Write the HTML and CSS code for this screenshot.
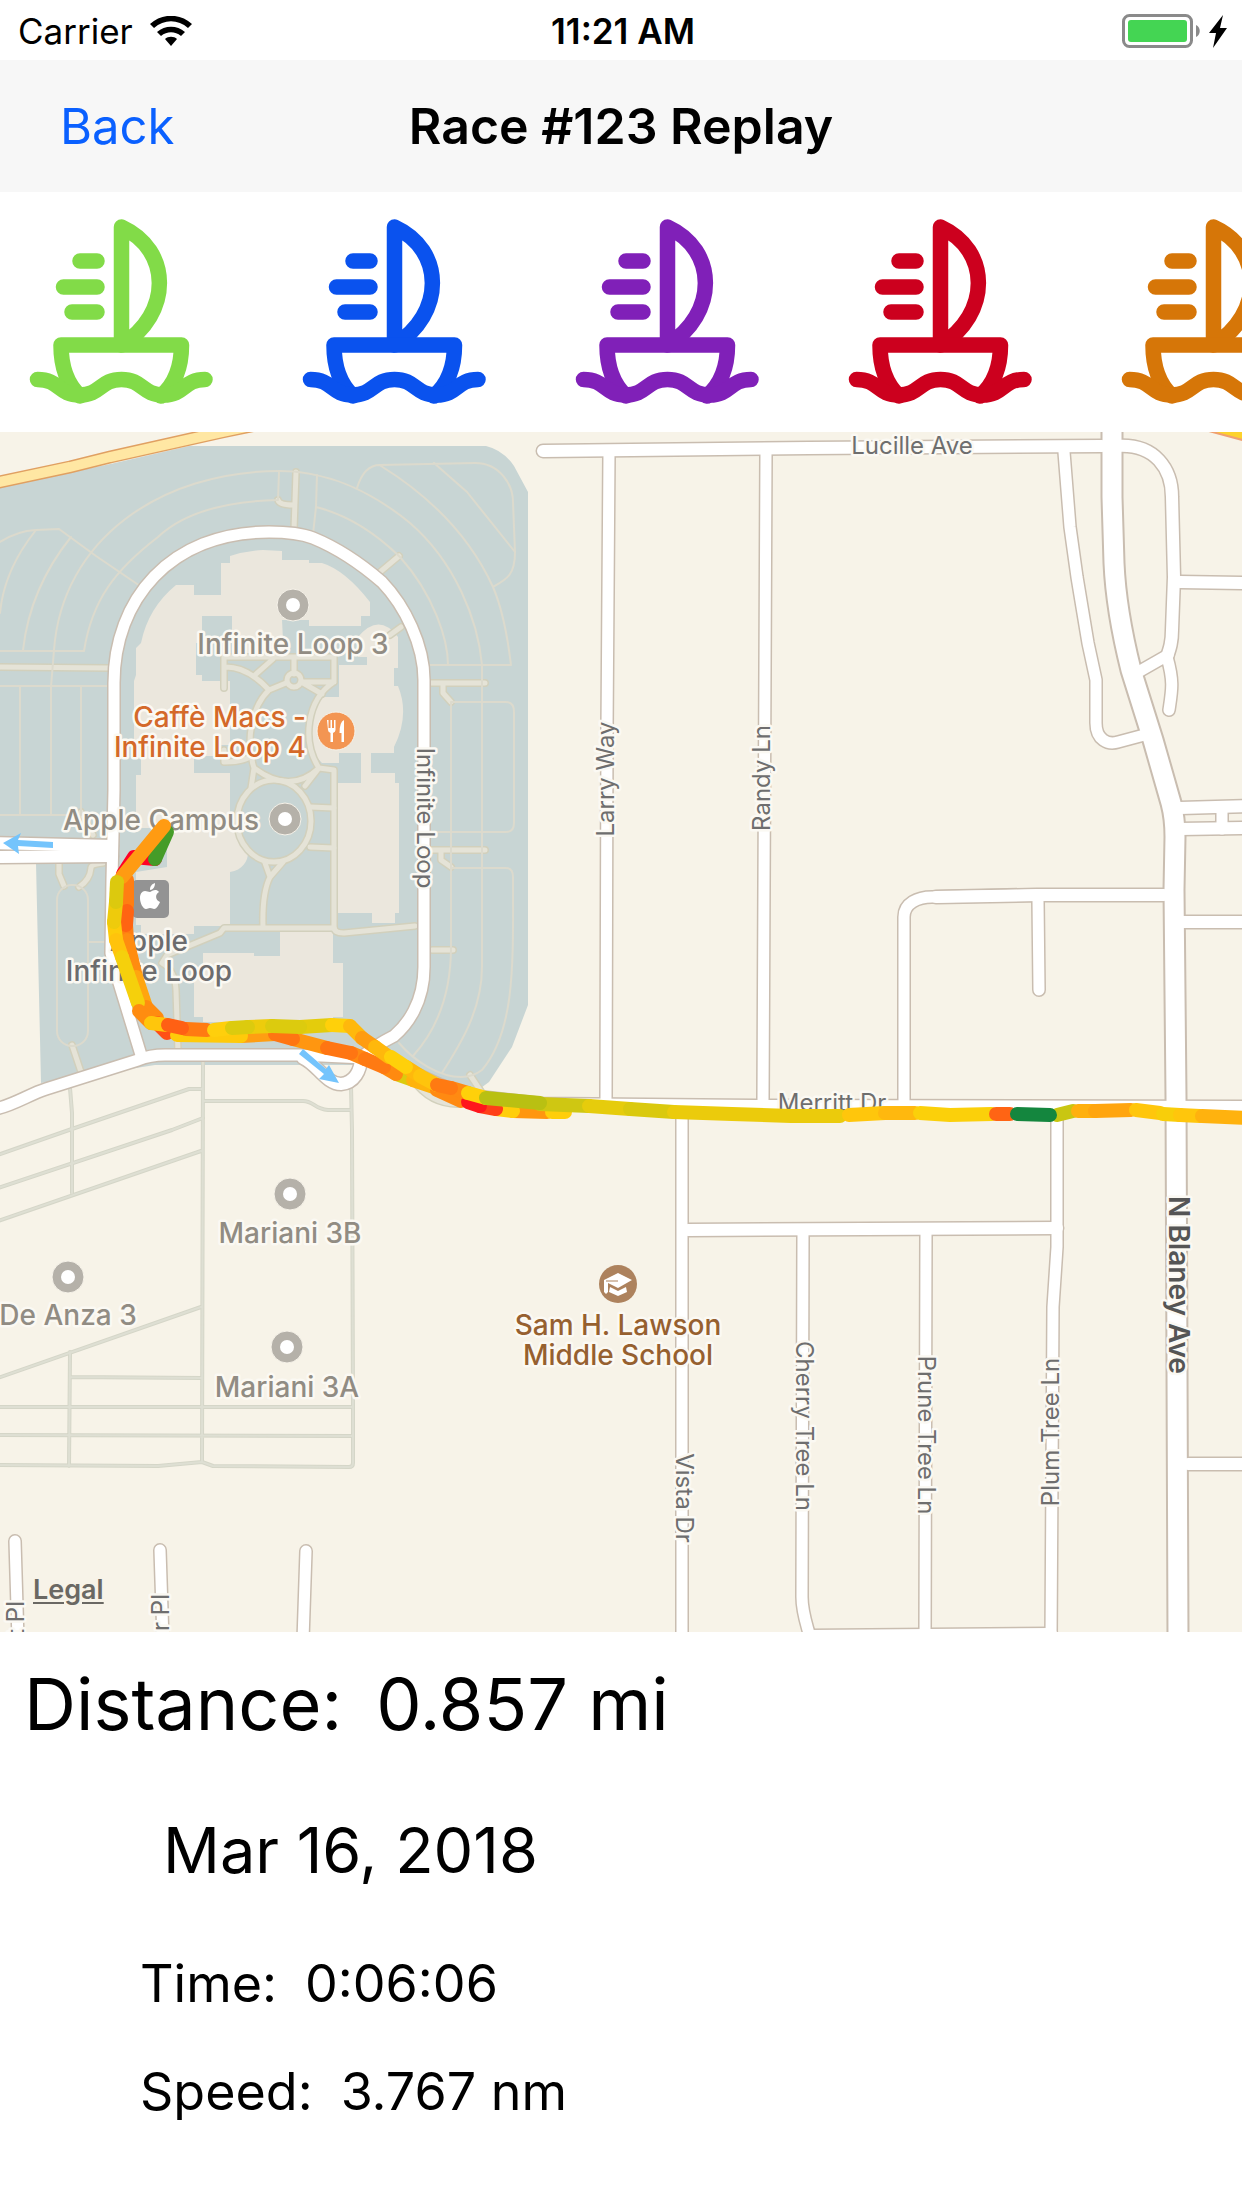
FILE: index.html
```html
<!DOCTYPE html>
<html lang="en">
<head>
<meta charset="utf-8">
<meta name="viewport" content="width=device-width, initial-scale=1">
<title>Race #123 Replay</title>
<link rel="stylesheet" href="styles.css">
</head>
<body>
<svg class="defs" aria-hidden="true">
  <symbol id="boat" viewBox="0 0 184 186">
    <g fill="none" stroke="currentColor" stroke-width="15.500" stroke-linecap="round" stroke-linejoin="round">
      <path d="M92.500 126V8C143 31 143 95 92.500 126"/>
      <path d="M51 177C39 166 32 148 32 126H152.500C152.500 148 145 166 132 177"/>
      <path d="M8.500 160.500C31 160.500 29 176 50.500 176S71 160.500 92.500 160.500S113 176 134.500 176S154 160.500 176 160.500"/>
      <path d="M51 42H68M34.500 68H68M43 93H68"/>
    </g>
  </symbol>
  <symbol id="place" viewBox="0 0 34 34">
    <circle cx="17" cy="17" r="16" fill="#b5b1a9" stroke="#f7f3ea" stroke-width="1"/>
    <circle cx="17" cy="17" r="7" fill="#fff"/>
  </symbol>
</svg>

<div class="status">
  <div class="status-left">
    <span>Carrier</span>
    <svg class="wifi" viewBox="0 0 42 30" aria-label="Wi-Fi">
      <path d="M21 30 15 23C18 20 24 20 27 23Z"/>
      <path d="M7 16C15 9 27 9 35 16L31 20C25 15 17 15 11 20Z"/>
      <path d="M0 8C12-3 30-3 42 8L38 12C28 3 14 3 4 12Z"/>
    </svg>
  </div>
  <time class="clock">11:21 AM</time>
  <div class="status-right">
    <svg class="battery" viewBox="0 0 106 34" aria-label="Charging">
      <rect x="1.5" y="1.5" width="68" height="31" rx="6" fill="none" stroke="#8a8a8a" stroke-width="3"/>
      <rect x="6" y="6" width="59" height="22" rx="3" fill="#44d553"/>
      <path d="M74 11C79 13 79 21 74 23Z" fill="#8a8a8a"/>
      <path d="M101 1 87 19H94L91 34 105 14H98Z"/>
    </svg>
  </div>
</div>

<header class="navbar">
  <button class="back" type="button">Back</button>
  <h1 class="title">Race #123 Replay</h1>
</header>

<nav class="boats" aria-label="Boats">
  <button class="boat green" type="button" aria-label="Green boat"><svg><use href="#boat"/></svg></button>
  <button class="boat blue" type="button" aria-label="Blue boat"><svg><use href="#boat"/></svg></button>
  <button class="boat purple" type="button" aria-label="Purple boat"><svg><use href="#boat"/></svg></button>
  <button class="boat red" type="button" aria-label="Red boat"><svg><use href="#boat"/></svg></button>
  <button class="boat orange" type="button" aria-label="Orange boat"><svg><use href="#boat"/></svg></button>
</nav>

<main>
<div class="map">
<svg class="map-canvas" viewBox="0 432 1242 1200" role="img" aria-label="Map of the race track">
  <defs>
    <g id="roads-minor">
      <path d="M609 453 607 730 606 1100M766 453 763 1100"/>
      <path d="M1064 452 1070 527 1077 577 1088 643 1096 680V723C1096 740 1108 745 1118 742L1148 734"/>
      <path d="M904 1100V917C904 903 918 897 932 897L1037 895M1038 900 1039 990"/>
      <path d="M1168 655 1140 671M1167 657C1174 682 1172 690 1169 710M1222 808V829"/>
      <path d="M682 1110V1640M1057 1110V1247L1053 1307 1051 1640M803 1235 802 1597C802 1612 806 1622 810 1637M926 1233 925 1640"/>
      <path d="M15 1541 18 1640M160 1550 163 1640M306 1551 303 1640"/>
    </g>
    <g id="roads-mid">
      <path d="M543 451 809 448 1102 446M1116 446C1156 443 1172 470 1172 497L1174 577 1172 630C1172 642 1170 648 1167 657"/>
      <path d="M936 897 1037 895 1164 895M1180 582 1250 583M1180 808 1250 806M1180 829 1250 828M1183 922 1250 922"/>
      <path d="M688 1230 1057 1228M1188 1464H1250M810 1636 1051 1634"/>
      <path d="M362 1057C394 1057 430 1086 470 1096L540 1104 755 1106 1250 1107"/>
      <path d="M-5 843 112 846M-5 857 112 856"/>
      <path d="M303 1058C317 1064 326 1084 341 1084C354 1083 361 1071 361 1057"/>
    </g>
    <g id="roads-loop">
      <path d="M141 1055 119 983 111 953 112 880 114 790V683C114 600 170 532 269 532C280 532 300 533 313 538C335 547 360 563 382 582C405 606 424 645 424 680V967C424 1003 407 1025 394 1036C382 1042 372 1048 362 1057"/>
      <path d="M-5 1109C12 1106 30 1094 46 1089L138 1060Q150 1055 165 1055L300 1055 364 1058"/>
    </g>
    <g id="roads-major">
      <path d="M1112 425V497L1114 563Q1116 610 1131 670L1153 740 1171 803Q1175 818 1175 837L1174 890 1176 1097 1178 1640"/>
    </g>
    <g id="paths-wide">
      <path d="M296 472 294 530M278 500Q279 505 293 505M399 556 380 572M401 627 390 635M-5 667 110 668M430 683H485M443 684V693L451 702"/>
      <path d="M224 688V657H334V682H301M226 667Q248 667 269 690M273 659 255 675M294 657V674M286 683 269 690C252 706 245 740 254 768L251 788M303 683 322 694M334 682C306 700 302 742 319 768C300 786 278 786 254 768M319 768 305 786M319 768 334 770V927Q334 933 344 933L415 926M248 758Q240 762 224 762V750"/>
      <path d="M310 807 334 808M310 847 334 848M265 863 270 877 283 862M270 877Q262 893 263 927M334 928H224L220 933 167 955 162 963Q175 970 176 990L178 1052"/>
      <path d="M432 850H485M441 852V860L451 867M432 950H453M59 863V874L64 886M103 863Q91 864 91 868Q90 880 79 887M72 1045 81 1072M81 812 93 835M470 1075 484 1096M413 1080Q430 1104 458 1104"/>
      <circle cx="294" cy="680" r="7"/>
      <ellipse cx="274" cy="821" rx="37" ry="41"/>
    </g>
    <g id="lot-lines">
      <path d="M-5 1156 69 1130 189 1089H203M-5 1189 172 1130 203 1118M-5 1222 201 1151M70 1088 72 1113V1193M203 1056 202 1462M203 1101H303C314 1101 314 1109 328 1110H351M351 1086 352 1130 353 1407V1463Q353 1467 349 1467L213 1466 202 1462 158 1466-5 1465M201 1307-5 1379M70 1352 69 1466M70 1377 202 1378M-5 1407H353M-5 1435 353 1436"/>
    </g>
  </defs>

  <rect class="land" x="0" y="432" width="1242" height="1200"/>
  <path class="campus" d="M0 487 115 463 189 446H486Q503 450 514 466L528 492V1005L512 1047 489 1082 470 1096 400 1065H155L41 1083 36 863 0 862Z"/>
  <path class="highway-edge" d="M-5 483 70 467 110 457 222 432 270 422"/>
  <path class="highway" d="M-5 483 70 467 110 457 222 432 270 422"/>
  <path class="corner-edge" d="M1205 430H1250V442Z"/>

  <g class="lot-casing"><use href="#lot-lines"/></g>
  <g class="lot-fill"><use href="#lot-lines"/></g>

  <g class="building">
    <path d="M221 563H230V556Q246 551 263 550L282 551V560H309V563H322Q345 570 370 602V616H361V626H309V620H282L284 660H232V616H202V643H196V675H202V681H230V745H221V756H194V773H230V830C252 834 256 868 230 872V926H194V934H141V925H136V872L167 867V828H136V775H141V745H134V681L136 675V648L141 643Q148 608 176 585H194V595H221Z"/>
    <path d="M358 637Q379 612 398 637V668H394V686H398Q410 715 394 747V753H371V773H395V783H399V913H395V923H372V913H336V783H361V753H339V763H322C303 745 303 715 322 697H339V665H367V657H358Z"/>
    <path d="M280 926H333V963H343V1017H333V1022H203V1017H194V967H203V953H254V956H280Z"/>
  </g>

  <g class="path-casing"><use href="#paths-wide"/></g>
  <g class="path-fill"><use href="#paths-wide"/></g>

  <g class="thin">
    <path d="M51 687 54 650C62 540 160 471 280 471C325 471 370 490 410 523C455 562 478 620 482 665V967C482 1010 460 1045 442 1073"/>
    <path d="M0 651H84C92 600 115 570 158 537Q195 502 278 500L279 472M0 686H108M20 686V815M51 686V815M81 686V815M0 815H81"/>
    <path d="M0 542Q17 531 36 530L59 529 96 556 143 588M36 530Q4 570 0 613M71 537Q30 588 23 650"/>
    <path d="M317 475 316 507 313 534M316 507Q360 518 400 557C434 595 448 640 448 665M357 488Q364 465 380 465L475 463C500 463 513 485 513 502L515 552C515 575 507 579 493 587M381 466Q460 515 493 587Q505 615 511 665H427M434 463 467 492 515 552"/>
    <path d="M451 868V702H506Q514 702 514 712V823Q514 832 506 832H434M451 868H506Q513 868 513 877C513 960 516 1030 482 1070Q473 1077 461 1077C440 1077 415 1062 399 1043M451 867V947C451 1000 432 1035 413 1056M88 942H110"/>
    <rect x="57" y="885" width="31" height="161" rx="15"/>
  </g>

  <g class="casing">
    <use class="w-minor" href="#roads-minor"/>
    <use class="w-mid" href="#roads-mid"/>
    <use class="w-loop" href="#roads-loop"/>
    <use class="w-major" href="#roads-major"/>
  </g>
  <g class="surface">
    <use class="w-minor" href="#roads-minor"/>
    <use class="w-mid" href="#roads-mid"/>
    <use class="w-loop" href="#roads-loop"/>
    <use class="w-major" href="#roads-major"/>
  </g>

  <g class="arrow">
    <path d="M3 843 21 833 18 840 53 842V848L18 846 19 854Z"/>
    <path d="M303 1049 326 1069 329 1065 339 1083 319 1079 324 1074 299 1054Z"/>
  </g>

  <g class="pois">
    <use href="#place" x="276" y="588" width="34" height="34"/>
    <use href="#place" x="268" y="802" width="34" height="34"/>
    <use href="#place" x="273" y="1177" width="34" height="34"/>
    <use href="#place" x="51" y="1260" width="34" height="34"/>
    <use href="#place" x="270" y="1330" width="34" height="34"/>
    <circle cx="336" cy="731" r="19" fill="#f39552" stroke="#f7f3ea"/>
    <path d="M327 720h1.500v8h2v-8h1.500v8h2v-8h1.500v10q0 2-2.500 3v9h-2.500v-9q-2.500-1-2.500-3ZM344 720v22h-2.500v-9h-2q0-11 4.500-13Z" fill="#fff"/>
    <circle cx="618" cy="1284" r="19" fill="#ad825d"/>
    <path d="M604 1280 618 1273 632 1280 618 1288 608 1283V1292L606 1294 604 1292ZM610 1287 618 1291 626 1287 627 1292 618 1296 609 1292Z" fill="#fff"/>
    <path d="M606 1281H618" stroke="#ad825d"/>
    <rect x="132" y="880" width="37" height="38" rx="5" fill="#939393"/>
    <path d="M150 892c-2 0-3-1-5-1-3 0-5 3-5 7 0 5 3 11 6 11 2 0 2-1 4-1s3 1 4 1c3 0 5-5 6-7-5-2-5-8-1-10-3-4-7-1-9 0ZM150 890c0-4 2-6 5-7 0 4-2 7-5 7Z" fill="#fff"/>
  </g>

  <g class="label poi">
    <text x="293" y="654" text-anchor="middle">Infinite Loop 3</text>
    <text x="161" y="830" text-anchor="middle">Apple Campus</text>
    <text x="290" y="1243" text-anchor="middle">Mariani 3B</text>
    <text x="287" y="1397" text-anchor="middle">Mariani 3A</text>
    <text x="68" y="1325" text-anchor="middle">De Anza 3</text>
    <text class="food" x="306" y="727" text-anchor="end">Caffè Macs -</text>
    <text class="food" x="306" y="757" text-anchor="end">Infinite Loop 4</text>
    <text class="school" x="618" y="1335" text-anchor="middle">Sam H. Lawson</text>
    <text class="school" x="618" y="1365" text-anchor="middle">Middle School</text>
    <text class="station" x="149" y="951" text-anchor="middle">Apple</text>
    <text class="station" x="149" y="981" text-anchor="middle">Infinite Loop</text>
  </g>
  <g class="label street">
    <text x="912" y="454" text-anchor="middle">Lucille Ave</text>
    <text x="832" y="1111" text-anchor="middle">Merritt Dr</text>
    <text transform="translate(614 779) rotate(-90)" text-anchor="middle">Larry Way</text>
    <text transform="translate(770 778) rotate(-90)" text-anchor="middle">Randy Ln</text>
    <text transform="translate(417 818) rotate(90)" text-anchor="middle">Infinite Loop</text>
    <text transform="translate(676 1498) rotate(90)" text-anchor="middle">Vista Dr</text>
    <text transform="translate(796 1426) rotate(90)" text-anchor="middle">Cherry Tree Ln</text>
    <text transform="translate(918 1435) rotate(90)" text-anchor="middle">Prune Tree Ln</text>
    <text transform="translate(1059 1432) rotate(-90)" text-anchor="middle">Plum Tree Ln</text>
    <text transform="translate(24 1601) rotate(-90)" text-anchor="end">t Pl</text>
    <text transform="translate(169 1594) rotate(-90)" text-anchor="end">er Pl</text>
    <text class="avenue" transform="translate(1169 1285) rotate(90)" text-anchor="middle">N Blaney Ave</text>
  </g>

  <!-- Outbound leg, coloured by speed -->
  <g class="track">
    <path stroke="#ff0026" d="M155 859 134 857 123 874"/>
    <path stroke="#459c28" d="M167 832 155 859"/>
    <path stroke="#ff7e12" d="M127 880V905"/>
    <path stroke="#ff7e12" d="M126 925 127 940"/>
    <path stroke="#ff6412" d="M127 911 126 925"/>
    <path stroke="#ff8c10" d="M127 940 136 977"/>
    <path stroke="#ffa50f" d="M136 977 146 1007"/>
    <path stroke="#ff8c10" d="M146 1007 157 1018"/>
    <path stroke="#ff4f16" d="M157 1023 167 1033"/>
    <path stroke="#ff9e12" d="M241 1036 275 1034"/>
    <path stroke="#ffca0a" d="M177 1035 241 1036"/>
    <path stroke="#ff9610" d="M293 1039 327 1048"/>
    <path stroke="#ff7512" d="M275 1034 293 1039"/>
    <path stroke="#ff8a12" d="M351 1053 365 1059"/>
    <path stroke="#ff7512" d="M327 1048 351 1053"/>
    <path stroke="#dccb0e" d="M396 1074 413 1080"/>
    <path stroke="#ffb30c" d="M413 1080 437 1088"/>
    <path stroke="#ff8a10" d="M384 1067 396 1074"/>
    <path stroke="#ff7a12" d="M365 1059 384 1067"/>
    <path stroke="#ff8a12" d="M437 1090 461 1101"/>
    <path stroke="#ff960f" d="M513 1111 547 1112"/>
    <path stroke="#ffce0a" d="M552 1112H565"/>
    <path stroke="#ffce0a" d="M496 1109 513 1111"/>
    <path stroke="#ff3f18" d="M480 1106 496 1109"/>
    <path stroke="#ff151c" d="M468 1102 480 1106"/>
  </g>
  <!-- Return leg -->
  <g class="track">
    <path stroke="#ff9b12" d="M164 826 122 877"/>
    <path stroke="#fdcc0a" d="M114 922 116 940"/>
    <path stroke="#eecb0c" d="M116 902 114 922"/>
    <path stroke="#dcc90e" d="M117 882 116 902"/>
    <path stroke="#ffc30c" d="M116 940 122 957"/>
    <path stroke="#f5d00c" d="M122 957 138 1003"/>
    <path stroke="#ff8c10" d="M139 1011 151 1023"/>
    <path stroke="#ffc60c" d="M151 1023 167 1025"/>
    <path stroke="#ff7a12" d="M186 1029 207 1030"/>
    <path stroke="#ff6014" d="M168 1025 182 1028"/>
    <path stroke="#ffcf0c" d="M214 1030 231 1028"/>
    <path stroke="#edcc0c" d="M248 1027 272 1026"/>
    <path stroke="#dccb0e" d="M232 1028 248 1027"/>
    <path stroke="#e4cc0c" d="M300 1027 332 1025"/>
    <path stroke="#dccb0e" d="M272 1026 300 1027"/>
    <path stroke="#ffd00a" d="M332 1025 350 1026"/>
    <path stroke="#ffb80c" d="M350 1026 362 1038"/>
    <path stroke="#ff9c10" d="M362 1038 375 1047"/>
    <path stroke="#ffb80c" d="M375 1047 389 1057"/>
    <path stroke="#ffb80c" d="M406 1067 420 1076"/>
    <path stroke="#ffd00a" d="M391 1057 406 1067"/>
    <path stroke="#ffc40c" d="M420 1076 437 1085"/>
    <path stroke="#ff8a12" d="M451 1088 468 1093"/>
    <path stroke="#ff7a12" d="M437 1085 451 1088"/>
    <path stroke="#ffd00a" d="M468 1093 486 1098"/>
    <path stroke="#cfc712" d="M540 1104 589 1106"/>
    <path stroke="#b9c012" d="M486 1098 540 1103"/>
    <path stroke="#e6cc0c" d="M589 1106 630 1109"/>
    <path stroke="#dac90e" d="M630 1109 674 1112"/>
    <path stroke="#ebcb0c" d="M674 1112 732 1114 791 1116H840"/>
    <path stroke="#ffc60c" d="M849 1115 885 1113"/>
    <path stroke="#ffb80e" d="M885 1113 915 1113"/>
    <path stroke="#fbd00a" d="M920 1113 950 1115 992 1114"/>
    <path stroke="#ff6414" d="M996 1114H1010"/>
    <path stroke="#c9c612" d="M1057 1115 1073 1111"/>
    <path stroke="#14863e" d="M1017 1114 1050 1115"/>
    <path stroke="#ffb00e" d="M1078 1111 1095 1111"/>
    <path stroke="#ffa50f" d="M1095 1111 1131 1110"/>
    <path stroke="#ffc60c" d="M1136 1110 1160 1113"/>
    <path stroke="#f8ce0a" d="M1163 1114 1180 1115"/>
    <path stroke="#ffc60c" d="M1180 1115 1200 1116"/>
    <path stroke="#ffb20e" d="M1202 1116 1250 1118"/>
  </g>
</svg>
<a class="legal" href="#legal">Legal</a>
</div>

<section class="stats">
  <p class="distance"><span>Distance:</span><span>0.857 mi</span></p>
  <p class="date">Mar 16, 2018</p>
  <div class="readings">
    <p class="reading"><span>Time:</span><span>0:06:06</span></p>
    <p class="reading"><span>Speed:</span><span>3.767 nm</span></p>
  </div>
</section>
</main>
</body>
</html>
```
FILE: styles.css
```css
* { box-sizing: border-box; }
body {
  margin: 0;
  background: #fff;
  color: #000;
  font-family: Inter, "Liberation Sans", sans-serif;
  overflow-x: hidden;
}
p, h1 { margin: 0; }
button { border: 0; padding: 0; background: none; font: inherit; }
.defs { position: absolute; width: 0; height: 0; }

/* Status bar */
.status {
  display: grid;
  grid-template-columns: 1fr auto 1fr;
  align-items: center;
  height: 60px;
  padding: 2px 14px 0 18px;
  font-size: 35px;
  line-height: 44px;
}
.status-left { display: flex; align-items: center; gap: 17px; }
.status-right { display: flex; justify-content: flex-end; }
.clock { font-weight: 600; }
.wifi { width: 42px; height: 30px; }
.battery { width: 106px; height: 34px; }

/* Navigation bar */
.navbar {
  display: grid;
  grid-template-columns: 1fr auto 1fr;
  align-items: center;
  height: 132px;
  padding: 0 60px;
  background: #f7f7f7;
  font-size: 49px;
}
.back { justify-self: start; color: #0a60ff; }
.title { font-size: 50px; font-weight: 600; }

/* Boat picker */
.boats {
  display: flex;
  gap: 89px;
  height: 240px;
  padding: 27px 0 0 29px;
  overflow: hidden;
}
.boat { flex: none; width: 184px; height: 186px; }
.boat svg { display: block; width: 100%; height: 100%; }
.green { color: #82db48; }
.blue { color: #0a52ee; }
.purple { color: #8020b8; }
.red { color: #cc001e; }
.orange { color: #d67608; }

/* Map */
.map { position: relative; overflow: hidden; }
.map-canvas { display: block; width: 100%; height: auto; }
.land { fill: #f7f3e8; }
.campus { fill: #c8d5d4; }
.building { fill: #ebe7dd; }
.highway, .highway-edge { fill: none; stroke: #e0a062; stroke-width: 13; }
.highway { stroke: #ffe7a3; stroke-width: 10; }
.corner-edge { fill: #fdd22c; stroke: #f0a070; stroke-width: 2; }

.lot-casing, .lot-fill, .path-casing, .path-fill, .thin, .casing, .surface, .track {
  fill: none;
  stroke-linecap: round;
  stroke-linejoin: round;
}
.lot-casing { stroke: #d5d6c8; stroke-width: 4; }
.lot-fill { stroke: #dedfd3; stroke-width: 2; }
.path-casing { stroke: #d2d0bc; stroke-width: 8; }
.path-fill { stroke: #e5e3d7; stroke-width: 5; }
.thin { stroke: #dcdacd; stroke-width: 2; }

.casing { stroke: #c9bdb0; }
.casing .w-minor { stroke-width: 14; }
.casing .w-mid { stroke-width: 15; }
.casing .w-loop { stroke-width: 14; }
.casing .w-major { stroke-width: 23; }
.surface { stroke: #fff; }
.surface .w-minor { stroke-width: 11; }
.surface .w-mid { stroke-width: 12; }
.surface .w-loop { stroke-width: 11; }
.surface .w-major { stroke-width: 19; }

.arrow { fill: #74c4fc; }
.track { stroke-width: 14; }

.label { paint-order: stroke; stroke: #fbf9f3; stroke-width: 5; stroke-linejoin: round; }
.poi { font-size: 28px; font-weight: 500; fill: #918c83; }
.food { fill: #d4692a; }
.school { fill: #96602f; }
.station { fill: #6c6c6e; }
.street { font-size: 24px; fill: #6e6e6e; }
.avenue { font-size: 28px; font-weight: 600; fill: #555; }

.legal {
  position: absolute;
  left: 33px;
  bottom: 26px;
  color: #6a6863;
  font-size: 27px;
  font-weight: 600;
  line-height: 32px;
  text-underline-offset: 3px;
}

/* Race figures */
.stats { padding: 28px 24px; }
.distance, .reading { display: flex; }
.distance { gap: 34px; font-size: 72px; line-height: 88px; }
.date { margin-top: 64px; padding-left: 139px; font-size: 63px; line-height: 76px; }
.readings { display: grid; gap: 44px; margin-top: 64px; padding-left: 116px; }
.reading { gap: 28px; font-size: 52px; line-height: 64px; }
```
